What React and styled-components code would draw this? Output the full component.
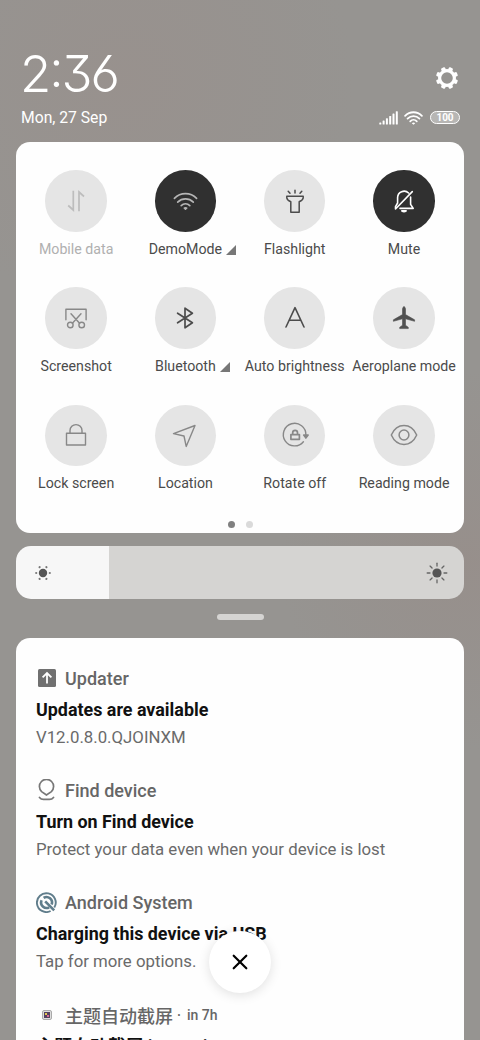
import React from 'react';
import styled, { createGlobalStyle } from 'styled-components';

const Global = createGlobalStyle`
  * { box-sizing: border-box; }
  html, body { margin: 0; height: 100%; overflow: hidden; }
  body { font-family: Roboto, "Noto Sans CJK SC", sans-serif; }
  svg { display: block; flex: none; }
`;

const Screen = styled.main`
  position: relative;
  width: 480px;
  height: 1040px;
  overflow: hidden;
  padding: 0 16px;
  display: flex;
  flex-direction: column;
  background:
    radial-gradient(circle at 125px 80px, rgba(153, 144, 140, 0.7), transparent 230px),
    radial-gradient(circle at 470px 560px, rgba(151, 142, 138, 0.8), transparent 190px),
    #969491;
`;

const Header = styled.header`
  flex: none;
  height: 142px;
  padding: 43px 4px 0 5px;
  color: #fff;
`;

const HeaderRow = styled.div`
  display: flex;
  justify-content: space-between;
  align-items: center;
  height: ${(p) => p.$height}px;
`;

const Clock = styled.div`
  font-family: Inter, sans-serif;
  font-weight: 300;
  font-size: 51px;
  line-height: 62px;
  margin: -3px 0 0 -1px;
  letter-spacing: -2.1px;
  font-feature-settings: "cv03", "cv09", "calt";
`;

const SettingsButton = styled.button`
  padding: 0;
  margin: 6px 1.5px 0 0;
  border: 0;
  background: none;
`;

const DateText = styled.div`
  font-size: 15.7px;
  line-height: 20px;
  padding-top: 1px;
`;

const StatusIcons = styled.div`
  display: flex;
  align-items: center;
  gap: 6px;
`;

const Battery = styled.div`
  display: flex;
  align-items: center;
  justify-content: center;
  width: 30px;
  height: 13.5px;
  margin-left: 1px;
  border: 1.4px solid #fff;
  border-radius: 7px;
  background: rgba(255, 255, 255, 0.32);
  font-size: 10px;
  font-weight: 700;
  line-height: 10px;
`;

const Panel = styled.section`
  flex: none;
  height: 391px;
  border-radius: 14px;
  background: #fefefe;
  padding-top: 28px;
`;

const TileGrid = styled.div`
  display: grid;
  grid-template-columns: repeat(4, 109.3px);
  grid-auto-rows: 117.3px;
  margin-left: 5.5px;
`;

const Tile = styled.div`
  display: flex;
  flex-direction: column;
  align-items: center;
  color: ${(p) => p.$tint};
`;

const TileDisc = styled.div`
  display: flex;
  align-items: center;
  justify-content: center;
  width: 61.5px;
  height: 61.5px;
  border-radius: 50%;
  background: ${(p) => (p.$active ? '#303030' : '#e5e5e5')};
`;

const TileLabel = styled.div`
  display: flex;
  align-items: center;
  margin-top: 8px;
  font-size: 14.2px;
  line-height: 19px;
  white-space: nowrap;
  color: ${(p) => (p.$dim ? '#b0b0b0' : '#4b4b4b')};
`;

const MoreMark = styled.span`
  width: 10px;
  margin: 1px -14px 0 4px;
`;

const Pager = styled.div`
  display: flex;
  justify-content: center;
  gap: 11px;
  margin-top: -1px;
`;

const PageDot = styled.i`
  width: 7px;
  height: 7px;
  border-radius: 50%;
  background: ${(p) => (p.$current ? '#808080' : '#dadada')};
`;

const Brightness = styled.div`
  display: flex;
  flex: none;
  justify-content: space-between;
  align-items: center;
  height: 53px;
  margin-top: 13px;
  padding: 0 16px 0 18px;
  border-radius: 15px;
  background: linear-gradient(90deg, #f7f7f7 93px, #d5d4d2 93px);
`;

const Handle = styled.div`
  flex: none;
  width: 47px;
  height: 6px;
  margin: 15px auto 17.5px;
  border-radius: 3px;
  background: #d5d4d2;
`;

const Notifications = styled.section`
  flex: none;
  height: 440px;
  padding: 27px 20px 0;
  border-radius: 14px 14px 0 0;
  background: #fefefe;
`;

const Notice = styled.article`
  height: 112.4px;
`;

const NoticeHead = styled.div`
  display: flex;
  align-items: center;
  gap: 8px;
  height: 27px;
  font-size: 18px;
  font-weight: 500;
  color: #666;
  white-space: nowrap;
`;

const IconSlot = styled.span`
  display: flex;
  justify-content: center;
  width: 21px;
`;

const When = styled.small`
  display: flex;
  gap: 6px;
  margin-left: -4px;
  font-size: 14px;
  font-weight: 500;
`;

const NoticeTitle = styled.div`
  margin-top: 4px;
  height: 27px;
  font-size: 17.9px;
  font-weight: 700;
  line-height: 28px;
  color: #111;
  white-space: nowrap;
`;

const NoticeText = styled.div`
  height: 27px;
  font-size: 16.8px;
  line-height: 28px;
  color: #6a6a6a;
  white-space: nowrap;
`;

const CloseButton = styled.button`
  position: absolute;
  left: 209px;
  top: 931px;
  display: flex;
  align-items: center;
  justify-content: center;
  width: 62px;
  height: 62px;
  padding: 0;
  border: 0;
  border-radius: 50%;
  background: #fff;
  box-shadow: 0 2px 12px rgba(0, 0, 0, 0.12);
`;

const Icon = ({ size = 26, box = size, width = 1.4, children }) => (
  <svg width={size} height={size} viewBox={`0 0 ${box} ${box}`} fill="none" stroke="currentColor"
    strokeWidth={width} strokeLinecap="round" strokeLinejoin="round">{children}</svg>
);

const Gear = () => (
  <svg width="24" height="24" viewBox="-12 -12 24 24" fill="#fff">
    <path fillRule="evenodd" d="M-9 0a9 9 0 1 0 18 0a9 9 0 1 0-18 0M-5.8 0a5.8 5.8 0 1 0 11.6 0a5.8 5.8 0 1 0-11.6 0" />
    {[22.5, 67.5, 112.5, 157.5, 202.5, 247.5, 292.5, 337.5].map((a) => (
      <rect key={a} x="-2.2" y="-11.1" width="4.4" height="4" rx="1.2" transform={`rotate(${a})`} />
    ))}
  </svg>
);

const Signal = () => (
  <svg width="19" height="14" fill="#fff">
    {[2, 4, 6.3, 8.6, 11, 13.3].map((h, i) => (
      <rect key={h} x={0.3 + i * 3.3} y={13.5 - h} width="2" height={h} rx="0.6" />
    ))}
  </svg>
);

const Wifi = ({ w = 19, h = 14, stroke = 2 }) => (
  <svg width={w} height={h} viewBox="0 0 24 18" fill="none" stroke="currentColor" strokeWidth={stroke} strokeLinecap="round">
    <path d="M1.2 6.2C7.2.1 16.8.1 22.8 6.2M4.4 9.8c4.3-4.2 10.9-4.2 15.2 0M7.8 13.2c2.4-2.4 6-2.4 8.4 0" />
    <path d="M9.8 15.6q2.2-1.8 4.4 0L12 17.8z" fill="currentColor" stroke="none" />
  </svg>
);

const Arrow = () => (
  <svg width="10" height="10"><path d="M10 0V10H0Z" fill="#777" /></svg>
);

const DataIcon = () => (
  <svg width="20" height="22" fill="none" stroke="currentColor" strokeWidth="1.7">
    <path d="M7.3.8V20L2.2 15.5M13 21.2V2L18 6.5" />
  </svg>
);
const FlashIcon = () => (
  <Icon width={1.5}>
    <path d="M4.8 8.2H21.2V9.8Q21.2 12 17.2 13.8V24.3H8.8V13.8Q4.8 12 4.8 9.8ZM13 2.2V5M6.2 3.2L8 5.2M19.8 3.2L18 5.2" />
  </Icon>
);
const MuteIcon = () => (
  <Icon width={1.6}>
    <path d="M17.6 5A6.5 6.5 0 0 0 6.6 9.6V15L4.5 18.6V21L21.3 3.6M9 20.4H22.2L19.6 16.4V9M10.8 22.9Q13 24.4 15.2 22.9Z" />
  </Icon>
);
const ShotIcon = () => (
  <Icon>
    <path d="M2.9 14.8V4.2H23.1V14.8M8 8.8L16.6 18.2M18 8.8L9.4 18.2" />
    <circle cx="7.3" cy="20" r="2.8" /><circle cx="18.7" cy="20" r="2.8" />
  </Icon>
);
const BluetoothIcon = () => (
  <Icon width={1.7}><path d="M5.6 8.2L20.4 17.7L13 22.8V3.2L20.4 8.3L5.6 17.8" /></Icon>
);
const AutoIcon = () => (
  <Icon width={1.6}><path d="M4 22L13 2.7L22 22M7.3 15.3H18.7" /></Icon>
);
const PlaneIcon = () => (
  <Icon width={0.6}>
    <path fill="currentColor" d="M13 1.8Q14.5 2 14.5 4V9.6L23.6 14.8V16.3L14.5 13.8V20.3L17.3 22.3V23.6H8.7V22.3L11.5 20.3V13.8L2.4 16.3V14.8L11.5 9.6V4Q11.5 2 13 1.8Z" />
  </Icon>
);
const LockIcon = () => (
  <Icon><path d="M3.5 11.2H22.5V23H3.5ZM7 11V8.6a6 6 0 0 1 12 0V11" /></Icon>
);
const LocationIcon = () => (
  <Icon><path d="M1.5 11.6L23 3.5L14.2 24.4L12 14Z" /></Icon>
);
const RotateIcon = () => (
  <Icon size={28}>
    <path d="M22.4 20.7A11.3 11.3 0 1 1 24.9 14" />
    <path d="M22.6 14H27.2L24.9 17.2Z" fill="currentColor" />
    <path strokeWidth="1.7" d="M9.9 13.6H18.4V18.3H9.9ZM11.7 13V11.8a2.4 2.4 0 0 1 4.8 0V13" />
  </Icon>
);
const EyeIcon = () => (
  <Icon size={28} width={1.5}>
    <path d="M1.3 14C4 8 9 4.6 14 4.6S24 8 26.7 14C24 20 19 23.4 14 23.4S4 20 1.3 14Z" /><circle cx="14" cy="14" r="4.9" />
  </Icon>
);

const SunLow = () => (
  <svg width="18" height="18" viewBox="-9 -9 18 18" fill="#555">
    <circle r="4.2" />
    {[0, 60, 120, 180, 240, 300].map((a) => <circle key={a} cx="6.8" r="1.1" opacity=".8" transform={`rotate(${a})`} />)}
  </svg>
);
const SunHigh = () => (
  <svg width="22" height="22" viewBox="-11 -11 22 22" fill="#555" stroke="#666" strokeWidth="1.3" strokeLinecap="round">
    <circle r="4.6" stroke="none" />
    {[0, 45, 90, 135, 180, 225, 270, 315].map((a) => <path key={a} d="M7 0H9.8" transform={`rotate(${a})`} />)}
  </svg>
);

const UpdaterIcon = () => (
  <svg width="18" height="18" fill="none">
    <rect width="18" height="18" rx="1.5" fill="#707070" />
    <path d="M9 14.5V4.5M4.6 8.4L9 4L13.4 8.4" stroke="#fff" strokeWidth="1.8" />
  </svg>
);
const FindIcon = () => (
  <svg width="17" height="22" fill="none" stroke="#777" strokeWidth="1.7" strokeLinecap="round">
    <path d="M8.5 16L3.6 12.6a7.1 7.1 0 1 1 9.8 0ZM1.5 18.5Q3 20.4 5.5 20.4H11.5Q14 20.4 15.5 18.5" />
  </svg>
);
const SystemIcon = () => (
  <svg width="21" height="21" fill="none" stroke="#607d8b">
    <path d="M14.6 19A9.4 9.4 0 1 1 18.3 15.6" strokeWidth="1.9" />
    <path d="M13.2 15.3A5.5 5.5 0 0 1 5.6 8.2M7.6 5.9A5.5 5.5 0 0 1 15.6 12.6" strokeWidth="2.6" />
    <path d="M9.2 9.4L18.2 18.4" strokeWidth="2.6" />
  </svg>
);
const ThemeIcon = () => (
  <svg width="10" height="10">
    <rect x=".5" y=".5" width="9" height="9" rx="1.5" fill="#ddd" stroke="#aaa" />
    <rect x="2" y="2" width="6" height="6" fill="#53415f" />
    <path d="M3 3H5V5H3Z" fill="#e6c84f" /><path d="M5 5H7V7H5Z" fill="#d56690" />
  </svg>
);

const tiles = [
  { label: 'Mobile data', icon: <DataIcon />, tint: '#bdbdbd', dim: true },
  { label: 'DemoMode', icon: <Wifi w={25} h={18.5} stroke={1.6} />, tint: '#b5b5b5', active: true, more: true },
  { label: 'Flashlight', icon: <FlashIcon />, tint: '#4c4c4c' },
  { label: 'Mute', icon: <MuteIcon />, tint: '#fff', active: true },
  { label: 'Screenshot', icon: <ShotIcon />, tint: '#888' },
  { label: 'Bluetooth', icon: <BluetoothIcon />, tint: '#4c4c4c', more: true },
  { label: 'Auto brightness', icon: <AutoIcon />, tint: '#4c4c4c' },
  { label: 'Aeroplane mode', icon: <PlaneIcon />, tint: '#505050' },
  { label: 'Lock screen', icon: <LockIcon />, tint: '#888' },
  { label: 'Location', icon: <LocationIcon />, tint: '#888' },
  { label: 'Rotate off', icon: <RotateIcon />, tint: '#888' },
  { label: 'Reading mode', icon: <EyeIcon />, tint: '#888' },
];

const notices = [
  { app: 'Updater', icon: <UpdaterIcon />, title: 'Updates are available', text: 'V12.0.8.0.QJOINXM' },
  { app: 'Find device', icon: <FindIcon />, title: 'Turn on Find device', text: 'Protect your data even when your device is lost' },
  { app: 'Android System', icon: <SystemIcon />, title: 'Charging this device via USB', text: 'Tap for more options.' },
  { app: '主题自动截屏', icon: <ThemeIcon />, when: 'in 7h', title: '主题自动截屏 is running' },
];

export default function App() {
  return (
    <>
      <Global />
      <Screen>
        <Header>
          <HeaderRow $height={64}>
            <Clock>2:36</Clock>
            <SettingsButton aria-label="Settings"><Gear /></SettingsButton>
          </HeaderRow>
          <HeaderRow $height={21}>
            <DateText>Mon, 27 Sep</DateText>
            <StatusIcons><Signal /><Wifi stroke={2.3} /><Battery>100</Battery></StatusIcons>
          </HeaderRow>
        </Header>
        <Panel>
          <TileGrid>
            {tiles.map((t) => (
              <Tile key={t.label} $tint={t.tint}>
                <TileDisc $active={t.active}>{t.icon}</TileDisc>
                <TileLabel $dim={t.dim}>{t.label}{t.more && <MoreMark><Arrow /></MoreMark>}</TileLabel>
              </Tile>
            ))}
          </TileGrid>
          <Pager><PageDot $current /><PageDot /></Pager>
        </Panel>
        <Brightness><SunLow /><SunHigh /></Brightness>
        <Handle />
        <Notifications>
          {notices.map((n) => (
            <Notice key={n.app}>
              <NoticeHead>
                <IconSlot>{n.icon}</IconSlot>{n.app}
                {n.when && <When><span>·</span><span>{n.when}</span></When>}
              </NoticeHead>
              <NoticeTitle>{n.title}</NoticeTitle>
              <NoticeText>{n.text}</NoticeText>
            </Notice>
          ))}
        </Notifications>
        <CloseButton aria-label="Close">
          <svg width="16" height="16" stroke="#000" strokeWidth="2.2" strokeLinecap="round">
            <path d="M1.7 1.7L14.3 14.3M14.3 1.7L1.7 14.3" />
          </svg>
        </CloseButton>
      </Screen>
    </>
  );
}
